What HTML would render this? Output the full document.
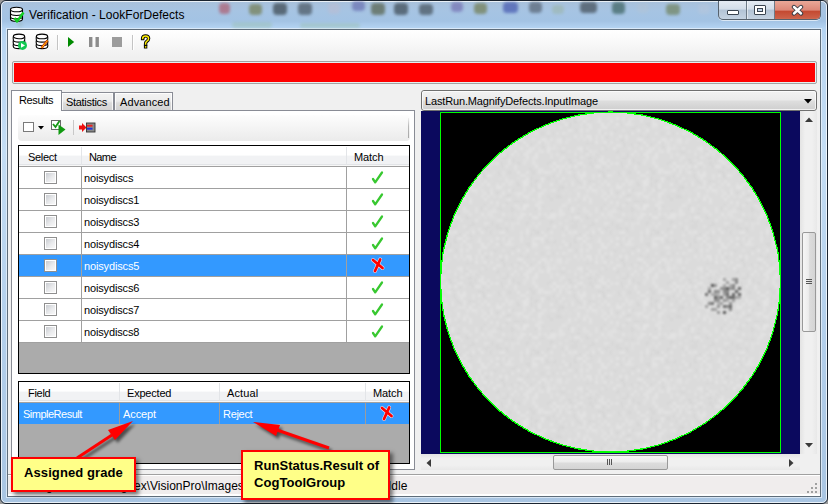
<!DOCTYPE html>
<html><head><meta charset="utf-8">
<style>
*{margin:0;padding:0;box-sizing:border-box}
html,body{width:828px;height:504px;overflow:hidden;background:#9a9a9a}
body{position:relative;font-family:"Liberation Sans",sans-serif;font-size:12px;color:#000}
.a{position:absolute}
.t{position:absolute;white-space:nowrap;line-height:12px}
.g{font-size:11px;line-height:11px;letter-spacing:-0.3px}
.cb{position:absolute;width:13px;height:13px;border:1px solid #8f8f8f;background:#fff;padding:1px}
.cb div{width:100%;height:100%;border:0;background:linear-gradient(135deg,#c9ccd1 0,#e9eaec 55%,#f8f8f8 100%)}
</style></head><body>
<div class="a" style="left:0;top:0;width:828px;height:504px;border:1px solid #1a2430;border-radius:6px;background:linear-gradient(180deg,#a9c1db 0,#a6c4e3 10px,#a3c3e4 20px,#b3d3f2 27px,#bad6f2 40px,#c4ddf4 150px,#b4d0ec 320px,#a9c5e2 504px)"></div>
<div class="a" style="left:1px;top:1px;width:826px;height:502px;border:1px solid rgba(255,255,255,.75);border-radius:5px"></div>
<div class="a" style="left:6px;top:28px;width:816px;height:470px;border:1px solid rgba(235,243,252,.7);border-top:none"></div>
<div class="a" style="left:7px;top:28px;width:814px;height:1px;background:rgba(255,255,255,.5)"></div>
<div class="a" style="left:219px;top:3px;width:11px;height:11px;border-radius:4px;background:#b04050;opacity:0.55;filter:blur(1.8px)"></div>
<div class="a" style="left:249px;top:4px;width:13px;height:11px;border-radius:4px;background:#6a7038;opacity:0.6;filter:blur(1.8px)"></div>
<div class="a" style="left:273px;top:3px;width:14px;height:12px;border-radius:4px;background:#303a40;opacity:0.65;filter:blur(1.8px)"></div>
<div class="a" style="left:298px;top:3px;width:14px;height:12px;border-radius:4px;background:#38424a;opacity:0.6;filter:blur(1.8px)"></div>
<div class="a" style="left:328px;top:3px;width:12px;height:11px;border-radius:4px;background:#c8b8c8;opacity:0.35;filter:blur(1.8px)"></div>
<div class="a" style="left:352px;top:1px;width:13px;height:10px;border-radius:4px;background:#5050a0;opacity:0.5;filter:blur(1.8px)"></div>
<div class="a" style="left:371px;top:3px;width:14px;height:12px;border-radius:4px;background:#485030;opacity:0.6;filter:blur(1.8px)"></div>
<div class="a" style="left:394px;top:3px;width:14px;height:12px;border-radius:4px;background:#283238;opacity:0.6;filter:blur(1.8px)"></div>
<div class="a" style="left:419px;top:4px;width:14px;height:11px;border-radius:4px;background:#343e44;opacity:0.6;filter:blur(1.8px)"></div>
<div class="a" style="left:451px;top:2px;width:12px;height:10px;border-radius:4px;background:#6050a0;opacity:0.5;filter:blur(1.8px)"></div>
<div class="a" style="left:474px;top:3px;width:13px;height:11px;border-radius:4px;background:#687038;opacity:0.6;filter:blur(1.8px)"></div>
<div class="a" style="left:503px;top:2px;width:15px;height:11px;border-radius:4px;background:#2838a0;opacity:0.55;filter:blur(1.8px)"></div>
<div class="a" style="left:529px;top:2px;width:13px;height:11px;border-radius:4px;background:#485260;opacity:0.6;filter:blur(1.8px)"></div>
<div class="a" style="left:552px;top:5px;width:12px;height:9px;border-radius:4px;background:#98b098;opacity:0.45;filter:blur(1.8px)"></div>
<div class="a" style="left:580px;top:2px;width:17px;height:11px;border-radius:4px;background:#38424a;opacity:0.65;filter:blur(1.8px)"></div>
<div class="a" style="left:612px;top:2px;width:13px;height:12px;border-radius:4px;background:#285048;opacity:0.6;filter:blur(1.8px)"></div>
<div class="a" style="left:637px;top:3px;width:12px;height:10px;border-radius:4px;background:#b8c4d0;opacity:0.35;filter:blur(1.8px)"></div>
<div class="a" style="left:666px;top:4px;width:14px;height:11px;border-radius:4px;background:#607038;opacity:0.55;filter:blur(1.8px)"></div>
<div class="a" style="left:698px;top:4px;width:12px;height:10px;border-radius:4px;background:#c0c8d8;opacity:0.35;filter:blur(1.8px)"></div>
<div class="a" style="left:232px;top:22px;width:40px;height:6px;border-radius:4px;background:#90b890;opacity:0.3;filter:blur(1.8px)"></div>
<div class="a" style="left:300px;top:23px;width:60px;height:5px;border-radius:4px;background:#90b890;opacity:0.3;filter:blur(1.8px)"></div>
<div class="a" style="left:17px;top:22px;width:6px;height:5px;border-radius:4px;background:#80a080;opacity:0.2;filter:blur(1.8px)"></div>
<svg class="a" style="left:8px;top:5px" width="18" height="19" viewBox="0 0 18 19">
<g fill="#fff" stroke="#000" stroke-width="1.1">
<path d="M2.5 4.5 v9.5 q0 2.3 6 2.3 q6 0 6-2.3 v-9.5"/>
<ellipse cx="8.5" cy="4.5" rx="6" ry="2.3"/>
<path d="M2.5 8.3 q0 2.2 6 2.2 q6 0 6-2.2 M2.5 11.7 q0 2.2 6 2.2 q6 0 6-2.2" fill="none"/>
</g>
<path d="M6.5 13 l2.5 3.5 l6.5-9" fill="none" stroke="#10d020" stroke-width="2.4" stroke-linejoin="round"/>
</svg>
<div class="t" style="left:29px;top:9px;font-size:12px;line-height:12px;color:#000;letter-spacing:0.05px">Verification - LookForDefects</div>
<div class="a" style="left:718px;top:1px;width:103px;height:19px;border:1px solid #56616d;border-top:none;border-radius:0 0 5px 5px;overflow:hidden;background:linear-gradient(180deg,#e4ebf3 0,#d2dde9 45%,#b3c4d6 50%,#c5d3e2 100%);box-shadow:0 1px 0 rgba(255,255,255,.6)">
 <div class="a" style="left:27px;top:0;width:1px;height:20px;background:#6d7a87"></div>
 <div class="a" style="left:28px;top:0;width:1px;height:20px;background:rgba(255,255,255,.5)"></div>
 <div class="a" style="left:55px;top:0;width:1px;height:20px;background:#6d7a87"></div>
 <div class="a" style="left:56px;top:0;width:46px;height:20px;background:linear-gradient(180deg,#e9a898 0,#dc8878 45%,#c44a32 52%,#cc6048 85%,#d88a70 100%)"></div>
</div>
<div class="a" style="left:727px;top:10px;width:12px;height:5px;background:#fff;border:1px solid #3a4450;border-radius:1px"></div>
<div class="a" style="left:754px;top:5px;width:12px;height:10px;border:1px solid #3a4450;border-radius:1px;background:#fff;padding:2px"><div style="width:100%;height:100%;background:#c4d6ea;border:1px solid #3a4450"></div></div>
<svg class="a" style="left:790px;top:4px" width="15" height="12" viewBox="0 0 15 12"><path d="M4 3 L11 9.5 M11 3 L4 9.5" stroke="#3a3f48" stroke-width="4.4" stroke-linecap="round"/><path d="M4 3 L11 9.5 M11 3 L4 9.5" stroke="#fff" stroke-width="2.4" stroke-linecap="round"/></svg>
<div class="a" style="left:7px;top:29px;width:814px;height:468px;border:1px solid #5f6d7a;background:#f0f0f0"></div>
<div class="a" style="left:8px;top:30px;width:812px;height:27px;background:linear-gradient(180deg,#fff 0,#fbfbfb 30%,#f0f0f0 100%)"></div>
<div class="a" style="left:57px;top:35px;width:1px;height:15px;background:#c4c4c4"></div>
<div class="a" style="left:58px;top:35px;width:1px;height:15px;background:#fff"></div>
<div class="a" style="left:132px;top:35px;width:1px;height:15px;background:#c4c4c4"></div>
<div class="a" style="left:133px;top:35px;width:1px;height:15px;background:#fff"></div>
<svg class="a" style="left:11px;top:32px" width="50" height="20" viewBox="0 0 50 20">
<g fill="#fff" stroke="#000" stroke-width="1.1">
<path d="M2.4 4.4 q-.5 1.9 0 3.8 q-.5 1.8 0 3.6 q-.5 1.6 0 3 q0 1.8 5.6 1.8 q5.6 0 5.6-1.8 q.5-1.4 0-3 q.5-1.8 0-3.6 q.5-1.9 0-3.8"/>
<ellipse cx="8" cy="4.4" rx="5.6" ry="2.3"/>
<path d="M2.4 8.2 q0 1.9 5.6 1.9 q5.6 0 5.6-1.9 M2.4 11.8 q0 1.9 5.6 1.9 q5.6 0 5.6-1.9" fill="none"/>
<path d="M25.4 4.4 q-.5 1.9 0 3.8 q-.5 1.8 0 3.6 q-.5 1.6 0 3 q0 1.8 5.6 1.8 q5.6 0 5.6-1.8 q.5-1.4 0-3 q.5-1.8 0-3.6 q.5-1.9 0-3.8"/>
<ellipse cx="31" cy="4.4" rx="5.6" ry="2.3"/>
<path d="M25.4 8.2 q0 1.9 5.6 1.9 q5.6 0 5.6-1.9 M25.4 11.8 q0 1.9 5.6 1.9 q5.6 0 5.6-1.9" fill="none"/>
</g>
<circle cx="11.5" cy="13.4" r="4.5" fill="#10c850"/>
<path d="M10 11 l4 2.4 l-4 2.4z" fill="#fff"/>
<path d="M30.5 16 l6-7.5" stroke="#d02000" stroke-width="2.4"/>
<path d="M30.5 16 l6-7.5" stroke="#ffe000" stroke-width="1"/>
</svg>
<svg class="a" style="left:66px;top:36px" width="90" height="14" viewBox="0 0 90 14">
<path d="M2 1 l6.2 5 l-6.2 5z" fill="#008a00"/>
<rect x="23" y="1" width="3.4" height="10" fill="#8c8c8c"/>
<rect x="29.5" y="1" width="3.4" height="10" fill="#8c8c8c"/>
<rect x="46" y="1" width="10" height="10" fill="#9c9c9c"/>
</svg>
<svg class="a" style="left:139px;top:34px" width="13" height="16" viewBox="0 0 13 16">
<path d="M3.6 4.6 Q3.6 1.9 6.6 1.9 Q9.6 1.9 9.6 4.6 Q9.6 6.4 7.7 7.4 Q6.6 8.1 6.6 9.6 V10" fill="none" stroke="#000" stroke-width="3.4" stroke-linecap="square"/>
<rect x="4.9" y="11.1" width="3.4" height="3.4" fill="#000"/>
<path d="M3.6 4.6 Q3.6 1.9 6.6 1.9 Q9.6 1.9 9.6 4.6 Q9.6 6.4 7.7 7.4 Q6.6 8.1 6.6 9.6 V10" fill="none" stroke="#ffee00" stroke-width="1.5" stroke-linecap="square"/>
<rect x="5.9" y="12.1" width="1.5" height="1.5" fill="#ffee00"/>
</svg>
<div class="a" style="left:12px;top:61px;width:805px;height:23px;border:1px solid #a3a3a3;border-radius:2px;background:#e4eeee;padding:1px"><div style="width:100%;height:100%;background:#ff0000"></div></div>
<div class="a" style="left:61px;top:92px;width:53px;height:19px;border:1px solid #898c95;border-bottom:none;background:linear-gradient(180deg,#f3f3f3 0,#ececec 45%,#dcdcdc 55%,#d2d2d2 100%)"><div style="position:absolute;inset:0;border:1px solid rgba(255,255,255,.8);border-bottom:none"></div></div>
<div class="a" style="left:114px;top:92px;width:59px;height:19px;border:1px solid #898c95;border-bottom:none;background:linear-gradient(180deg,#f3f3f3 0,#ececec 45%,#dcdcdc 55%,#d2d2d2 100%)"><div style="position:absolute;inset:0;border:1px solid rgba(255,255,255,.8);border-bottom:none"></div></div>
<div class="a" style="left:11px;top:110px;width:404px;height:360px;border:1px solid #898c95;background:#fff"></div>
<div class="a" style="left:11px;top:90px;width:51px;height:21px;border:1px solid #898c95;border-bottom:none;background:#fff"></div>
<div class="t g" style="left:19px;top:95px;letter-spacing:-0.35px">Results</div>
<div class="t g" style="left:66px;top:97px;letter-spacing:-0.3px">Statistics</div>
<div class="t g" style="left:120px;top:97px;letter-spacing:0.1px">Advanced</div>
<div class="a" style="left:18px;top:115px;width:392px;height:26px;border-radius:4px;background:linear-gradient(180deg,#fdfdfd 0,#f4f4f4 50%,#ebebeb 100%)"></div>
<div class="a" style="left:408px;top:118px;width:1px;height:20px;background:linear-gradient(180deg,#f0f0f0 0,#b8b8b8 40%,#a8a8a8 100%)"></div>
<div class="a" style="left:23px;top:122px;width:11px;height:10px;border:1px solid #7a7a7a;background:#fff"></div>
<svg class="a" style="left:38px;top:126px" width="7" height="4"><path d="M0 0h6l-3 3.5z" fill="#000"/></svg>
<svg class="a" style="left:50px;top:119px" width="48" height="18" viewBox="0 0 48 18">
<rect x="1.5" y="1.5" width="9" height="9" fill="#fff" stroke="#6a6a6a"/>
<path d="M3 5 l2.5 3 l4-6" fill="none" stroke="#169616" stroke-width="1.8"/>
<path d="M8.5 5.5 l7 5 l-7 5.5z" fill="#109a10"/>
<rect x="23" y="1" width="1" height="15" fill="#c8c8c8"/>
<path d="M29 6.5 h3 v-2.5 l4.5 4.5 l-4.5 4.5 v-2.5 h-3z" fill="#ee1010"/>
<rect x="36.5" y="4" width="8.5" height="9" fill="#8a8a8a" stroke="#333" stroke-width="0.9"/>
<rect x="37" y="5.8" width="5.5" height="1.8" fill="#f02020"/>
<rect x="37" y="8.8" width="5.5" height="1.8" fill="#2030e0"/>
</svg>
<div class="a" style="left:18px;top:145px;width:392px;height:229px;border:1px solid #000;background:#ababab;overflow:hidden">
 <div class="a" style="left:0;top:0;width:390px;height:21px;background:linear-gradient(180deg,#fff 0,#fff 42%,#f1f2f4 50%,#f1f2f4 100%)"></div>
 <div class="a" style="left:0;top:18px;width:390px;height:1px;background:#e2e4e7"></div><div class="a" style="left:0;top:19px;width:390px;height:1px;background:#f7f7f7"></div><div class="a" style="left:0;top:20px;width:390px;height:1px;background:#a0a0a0"></div>
 <div class="a" style="left:62px;top:1px;width:1px;height:18px;background:#e3e5e8"></div>
 <div class="a" style="left:327px;top:1px;width:1px;height:18px;background:#e3e5e8"></div>
 <div class="a" style="left:0;top:21px;width:390px;height:22px;background:#fff;border-bottom:1px solid #a0a0a0"></div>
 <div class="a" style="left:62px;top:21px;width:1px;height:22px;background:#a0a0a0"></div>
 <div class="a" style="left:327px;top:21px;width:1px;height:22px;background:#a0a0a0"></div>
 <div class="a" style="left:0;top:43px;width:390px;height:22px;background:#fff;border-bottom:1px solid #a0a0a0"></div>
 <div class="a" style="left:62px;top:43px;width:1px;height:22px;background:#a0a0a0"></div>
 <div class="a" style="left:327px;top:43px;width:1px;height:22px;background:#a0a0a0"></div>
 <div class="a" style="left:0;top:65px;width:390px;height:22px;background:#fff;border-bottom:1px solid #a0a0a0"></div>
 <div class="a" style="left:62px;top:65px;width:1px;height:22px;background:#a0a0a0"></div>
 <div class="a" style="left:327px;top:65px;width:1px;height:22px;background:#a0a0a0"></div>
 <div class="a" style="left:0;top:87px;width:390px;height:22px;background:#fff;border-bottom:1px solid #a0a0a0"></div>
 <div class="a" style="left:62px;top:87px;width:1px;height:22px;background:#a0a0a0"></div>
 <div class="a" style="left:327px;top:87px;width:1px;height:22px;background:#a0a0a0"></div>
 <div class="a" style="left:0;top:109px;width:390px;height:22px;background:#3399ff;border-bottom:1px solid #a0a0a0"></div>
 <div class="a" style="left:62px;top:109px;width:1px;height:22px;background:#a0a0a0"></div>
 <div class="a" style="left:327px;top:109px;width:1px;height:22px;background:#a0a0a0"></div>
 <div class="a" style="left:0;top:131px;width:390px;height:22px;background:#fff;border-bottom:1px solid #a0a0a0"></div>
 <div class="a" style="left:62px;top:131px;width:1px;height:22px;background:#a0a0a0"></div>
 <div class="a" style="left:327px;top:131px;width:1px;height:22px;background:#a0a0a0"></div>
 <div class="a" style="left:0;top:153px;width:390px;height:22px;background:#fff;border-bottom:1px solid #a0a0a0"></div>
 <div class="a" style="left:62px;top:153px;width:1px;height:22px;background:#a0a0a0"></div>
 <div class="a" style="left:327px;top:153px;width:1px;height:22px;background:#a0a0a0"></div>
 <div class="a" style="left:0;top:175px;width:390px;height:22px;background:#fff;border-bottom:1px solid #a0a0a0"></div>
 <div class="a" style="left:62px;top:175px;width:1px;height:22px;background:#a0a0a0"></div>
 <div class="a" style="left:327px;top:175px;width:1px;height:22px;background:#a0a0a0"></div>
</div>
<div class="cb" style="left:44px;top:171px"><div></div></div>
<div class="t g" style="left:84px;top:173px;color:#000;letter-spacing:-0.15px">noisydiscs</div>
<svg class="a" style="left:369px;top:169px" width="16" height="16" viewBox="0 0 16 16"><path d="M4 10 L6.2 13.3 L13 3.5" fill="none" stroke="#38c830" stroke-width="2.3" stroke-linecap="round" stroke-linejoin="round"/></svg>
<div class="cb" style="left:44px;top:193px"><div></div></div>
<div class="t g" style="left:84px;top:195px;color:#000;letter-spacing:-0.15px">noisydiscs1</div>
<svg class="a" style="left:369px;top:191px" width="16" height="16" viewBox="0 0 16 16"><path d="M4 10 L6.2 13.3 L13 3.5" fill="none" stroke="#38c830" stroke-width="2.3" stroke-linecap="round" stroke-linejoin="round"/></svg>
<div class="cb" style="left:44px;top:215px"><div></div></div>
<div class="t g" style="left:84px;top:217px;color:#000;letter-spacing:-0.15px">noisydiscs3</div>
<svg class="a" style="left:369px;top:213px" width="16" height="16" viewBox="0 0 16 16"><path d="M4 10 L6.2 13.3 L13 3.5" fill="none" stroke="#38c830" stroke-width="2.3" stroke-linecap="round" stroke-linejoin="round"/></svg>
<div class="cb" style="left:44px;top:237px"><div></div></div>
<div class="t g" style="left:84px;top:239px;color:#000;letter-spacing:-0.15px">noisydiscs4</div>
<svg class="a" style="left:369px;top:235px" width="16" height="16" viewBox="0 0 16 16"><path d="M4 10 L6.2 13.3 L13 3.5" fill="none" stroke="#38c830" stroke-width="2.3" stroke-linecap="round" stroke-linejoin="round"/></svg>
<div class="cb" style="left:44px;top:259px"><div></div></div>
<div class="t g" style="left:84px;top:261px;color:#fff;letter-spacing:-0.15px">noisydiscs5</div>
<svg class="a" style="left:369px;top:255px" width="18" height="20" viewBox="0 0 18 20"><g stroke="#fff" stroke-width="3.8" stroke-linecap="round" opacity="0.85"><path d="M4 5 L13.5 13 M11.2 4.5 L6 16"/></g><g stroke="#f00" stroke-width="2.8" stroke-linecap="round"><path d="M4 5 L13.5 13 M11.2 4.5 L6 16"/></g></svg>
<div class="cb" style="left:44px;top:281px"><div></div></div>
<div class="t g" style="left:84px;top:283px;color:#000;letter-spacing:-0.15px">noisydiscs6</div>
<svg class="a" style="left:369px;top:279px" width="16" height="16" viewBox="0 0 16 16"><path d="M4 10 L6.2 13.3 L13 3.5" fill="none" stroke="#38c830" stroke-width="2.3" stroke-linecap="round" stroke-linejoin="round"/></svg>
<div class="cb" style="left:44px;top:303px"><div></div></div>
<div class="t g" style="left:84px;top:305px;color:#000;letter-spacing:-0.15px">noisydiscs7</div>
<svg class="a" style="left:369px;top:301px" width="16" height="16" viewBox="0 0 16 16"><path d="M4 10 L6.2 13.3 L13 3.5" fill="none" stroke="#38c830" stroke-width="2.3" stroke-linecap="round" stroke-linejoin="round"/></svg>
<div class="cb" style="left:44px;top:325px"><div></div></div>
<div class="t g" style="left:84px;top:327px;color:#000;letter-spacing:-0.15px">noisydiscs8</div>
<svg class="a" style="left:369px;top:323px" width="16" height="16" viewBox="0 0 16 16"><path d="M4 10 L6.2 13.3 L13 3.5" fill="none" stroke="#38c830" stroke-width="2.3" stroke-linecap="round" stroke-linejoin="round"/></svg>
<div class="t g" style="left:28px;top:152px">Select</div>
<div class="t g" style="left:89px;top:152px;letter-spacing:-0.6px">Name</div>
<div class="t g" style="left:354px;top:152px;letter-spacing:-0.1px">Match</div>
<div class="a" style="left:18px;top:381px;width:392px;height:83px;border:1px solid #000;background:#ababab;overflow:hidden">
 <div class="a" style="left:0;top:0;width:390px;height:21px;background:linear-gradient(180deg,#fff 0,#fff 42%,#f1f2f4 50%,#f1f2f4 100%)"></div>
 <div class="a" style="left:0;top:18px;width:390px;height:1px;background:#e2e4e7"></div><div class="a" style="left:0;top:19px;width:390px;height:1px;background:#f7f7f7"></div><div class="a" style="left:0;top:20px;width:390px;height:1px;background:#a0a0a0"></div>
 <div class="a" style="left:0;top:21px;width:390px;height:21px;background:#3399ff"></div>
 <div class="a" style="left:100px;top:21px;width:1px;height:21px;background:#9c9c9c"></div>
 <div class="a" style="left:100px;top:1px;width:1px;height:18px;background:#e3e5e8"></div>
 <div class="a" style="left:200px;top:21px;width:1px;height:21px;background:#9c9c9c"></div>
 <div class="a" style="left:200px;top:1px;width:1px;height:18px;background:#e3e5e8"></div>
 <div class="a" style="left:346px;top:21px;width:1px;height:21px;background:#9c9c9c"></div>
 <div class="a" style="left:346px;top:1px;width:1px;height:18px;background:#e3e5e8"></div>
</div>
<div class="t g" style="left:28px;top:388px">Field</div>
<div class="t g" style="left:127px;top:388px;letter-spacing:-0.2px">Expected</div>
<div class="t g" style="left:227px;top:388px;letter-spacing:0.1px">Actual</div>
<div class="t g" style="left:373px;top:388px;letter-spacing:-0.1px">Match</div>
<div class="t g" style="left:23px;top:409px;color:#fff;letter-spacing:-0.5px">SimpleResult</div>
<div class="t g" style="left:123px;top:409px;color:#fff;letter-spacing:-0.1px">Accept</div>
<div class="t g" style="left:223px;top:409px;color:#fff">Reject</div>
<svg class="a" style="left:378px;top:403px" width="18" height="20" viewBox="0 0 18 20"><g stroke="#fff" stroke-width="3.8" stroke-linecap="round" opacity="0.85"><path d="M4 5 L13.5 13 M11.2 4.5 L6 16"/></g><g stroke="#f00" stroke-width="2.8" stroke-linecap="round"><path d="M4 5 L13.5 13 M11.2 4.5 L6 16"/></g></svg>
<div class="a" style="left:421px;top:90px;width:396px;height:21px;border:1px solid #707070;border-radius:3px;background:linear-gradient(180deg,#f2f2f2 0,#ebebeb 45%,#dddddd 55%,#cfcfcf 100%)"><div style="position:absolute;inset:0;border:1px solid rgba(255,255,255,.7);border-radius:2px"></div></div>
<div class="t g" style="left:425px;top:96px;letter-spacing:-0.15px">LastRun.MagnifyDefects.InputImage</div>
<svg class="a" style="left:804px;top:99px" width="9" height="5"><path d="M0 0h8l-4 4.5z" fill="#000"/></svg>
<svg class="a" style="left:421px;top:111px" width="379" height="343" viewBox="0 0 379 343">
<defs>
<filter id="nz" x="0" y="0" width="100%" height="100%"><feTurbulence type="fractalNoise" baseFrequency="0.16" numOctaves="1" seed="4"/><feColorMatrix type="matrix" values="0 0 0 0 1  0 0 0 0 1  0 0 0 0 1  0.9 0 0 0 -0.3"/></filter>
<filter id="bl2" x="0" y="0" width="100%" height="100%"><feGaussianBlur stdDeviation="1"/></filter>
<filter id="bl" x="-20%" y="-20%" width="140%" height="140%"><feGaussianBlur stdDeviation="1"/></filter>
<pattern id="pt" x="0" y="0" width="120" height="120" patternUnits="userSpaceOnUse"><rect x="0" y="0" width="3" height="3" fill="#fff" opacity="0.18"/><rect x="9" y="0" width="3" height="3" fill="#fff" opacity="0.20"/><rect x="21" y="0" width="3" height="3" fill="#fff" opacity="0.06"/><rect x="24" y="0" width="3" height="3" fill="#000" opacity="0.024"/><rect x="27" y="0" width="3" height="3" fill="#fff" opacity="0.20"/><rect x="30" y="0" width="3" height="3" fill="#fff" opacity="0.10"/><rect x="33" y="0" width="3" height="3" fill="#fff" opacity="0.24"/><rect x="45" y="0" width="3" height="3" fill="#fff" opacity="0.12"/><rect x="51" y="0" width="3" height="3" fill="#fff" opacity="0.23"/><rect x="54" y="0" width="3" height="3" fill="#000" opacity="0.017"/><rect x="60" y="0" width="3" height="3" fill="#fff" opacity="0.23"/><rect x="69" y="0" width="3" height="3" fill="#000" opacity="0.022"/><rect x="72" y="0" width="3" height="3" fill="#fff" opacity="0.07"/><rect x="78" y="0" width="3" height="3" fill="#fff" opacity="0.20"/><rect x="81" y="0" width="3" height="3" fill="#fff" opacity="0.23"/><rect x="99" y="0" width="3" height="3" fill="#fff" opacity="0.15"/><rect x="105" y="0" width="3" height="3" fill="#fff" opacity="0.23"/><rect x="114" y="0" width="3" height="3" fill="#000" opacity="0.022"/><rect x="117" y="0" width="3" height="3" fill="#000" opacity="0.030"/><rect x="0" y="3" width="3" height="3" fill="#000" opacity="0.015"/><rect x="3" y="3" width="3" height="3" fill="#fff" opacity="0.19"/><rect x="21" y="3" width="3" height="3" fill="#fff" opacity="0.17"/><rect x="30" y="3" width="3" height="3" fill="#fff" opacity="0.09"/><rect x="33" y="3" width="3" height="3" fill="#000" opacity="0.029"/><rect x="36" y="3" width="3" height="3" fill="#000" opacity="0.024"/><rect x="39" y="3" width="3" height="3" fill="#000" opacity="0.017"/><rect x="42" y="3" width="3" height="3" fill="#fff" opacity="0.21"/><rect x="48" y="3" width="3" height="3" fill="#000" opacity="0.025"/><rect x="78" y="3" width="3" height="3" fill="#000" opacity="0.019"/><rect x="84" y="3" width="3" height="3" fill="#fff" opacity="0.07"/><rect x="99" y="3" width="3" height="3" fill="#fff" opacity="0.11"/><rect x="102" y="3" width="3" height="3" fill="#000" opacity="0.021"/><rect x="105" y="3" width="3" height="3" fill="#fff" opacity="0.07"/><rect x="108" y="3" width="3" height="3" fill="#000" opacity="0.028"/><rect x="0" y="6" width="3" height="3" fill="#fff" opacity="0.23"/><rect x="9" y="6" width="3" height="3" fill="#fff" opacity="0.10"/><rect x="33" y="6" width="3" height="3" fill="#000" opacity="0.023"/><rect x="36" y="6" width="3" height="3" fill="#fff" opacity="0.20"/><rect x="39" y="6" width="3" height="3" fill="#fff" opacity="0.18"/><rect x="45" y="6" width="3" height="3" fill="#fff" opacity="0.17"/><rect x="57" y="6" width="3" height="3" fill="#fff" opacity="0.13"/><rect x="66" y="6" width="3" height="3" fill="#fff" opacity="0.08"/><rect x="69" y="6" width="3" height="3" fill="#fff" opacity="0.06"/><rect x="75" y="6" width="3" height="3" fill="#fff" opacity="0.22"/><rect x="81" y="6" width="3" height="3" fill="#fff" opacity="0.16"/><rect x="84" y="6" width="3" height="3" fill="#000" opacity="0.022"/><rect x="87" y="6" width="3" height="3" fill="#fff" opacity="0.09"/><rect x="90" y="6" width="3" height="3" fill="#fff" opacity="0.13"/><rect x="99" y="6" width="3" height="3" fill="#fff" opacity="0.19"/><rect x="111" y="6" width="3" height="3" fill="#fff" opacity="0.14"/><rect x="114" y="6" width="3" height="3" fill="#fff" opacity="0.20"/><rect x="117" y="6" width="3" height="3" fill="#fff" opacity="0.19"/><rect x="0" y="9" width="3" height="3" fill="#fff" opacity="0.19"/><rect x="3" y="9" width="3" height="3" fill="#000" opacity="0.016"/><rect x="6" y="9" width="3" height="3" fill="#000" opacity="0.020"/><rect x="12" y="9" width="3" height="3" fill="#000" opacity="0.023"/><rect x="21" y="9" width="3" height="3" fill="#fff" opacity="0.17"/><rect x="33" y="9" width="3" height="3" fill="#000" opacity="0.025"/><rect x="42" y="9" width="3" height="3" fill="#fff" opacity="0.21"/><rect x="48" y="9" width="3" height="3" fill="#000" opacity="0.020"/><rect x="54" y="9" width="3" height="3" fill="#fff" opacity="0.07"/><rect x="57" y="9" width="3" height="3" fill="#fff" opacity="0.21"/><rect x="69" y="9" width="3" height="3" fill="#fff" opacity="0.18"/><rect x="78" y="9" width="3" height="3" fill="#000" opacity="0.021"/><rect x="81" y="9" width="3" height="3" fill="#fff" opacity="0.07"/><rect x="87" y="9" width="3" height="3" fill="#fff" opacity="0.19"/><rect x="99" y="9" width="3" height="3" fill="#fff" opacity="0.13"/><rect x="111" y="9" width="3" height="3" fill="#fff" opacity="0.15"/><rect x="24" y="12" width="3" height="3" fill="#fff" opacity="0.23"/><rect x="27" y="12" width="3" height="3" fill="#000" opacity="0.024"/><rect x="39" y="12" width="3" height="3" fill="#fff" opacity="0.12"/><rect x="42" y="12" width="3" height="3" fill="#000" opacity="0.021"/><rect x="45" y="12" width="3" height="3" fill="#fff" opacity="0.16"/><rect x="48" y="12" width="3" height="3" fill="#fff" opacity="0.11"/><rect x="60" y="12" width="3" height="3" fill="#fff" opacity="0.23"/><rect x="66" y="12" width="3" height="3" fill="#fff" opacity="0.12"/><rect x="75" y="12" width="3" height="3" fill="#fff" opacity="0.23"/><rect x="78" y="12" width="3" height="3" fill="#000" opacity="0.019"/><rect x="84" y="12" width="3" height="3" fill="#fff" opacity="0.18"/><rect x="87" y="12" width="3" height="3" fill="#fff" opacity="0.17"/><rect x="90" y="12" width="3" height="3" fill="#fff" opacity="0.13"/><rect x="105" y="12" width="3" height="3" fill="#000" opacity="0.018"/><rect x="108" y="12" width="3" height="3" fill="#000" opacity="0.019"/><rect x="111" y="12" width="3" height="3" fill="#fff" opacity="0.23"/><rect x="114" y="12" width="3" height="3" fill="#fff" opacity="0.21"/><rect x="3" y="15" width="3" height="3" fill="#fff" opacity="0.15"/><rect x="6" y="15" width="3" height="3" fill="#fff" opacity="0.17"/><rect x="12" y="15" width="3" height="3" fill="#fff" opacity="0.06"/><rect x="18" y="15" width="3" height="3" fill="#fff" opacity="0.12"/><rect x="27" y="15" width="3" height="3" fill="#000" opacity="0.017"/><rect x="39" y="15" width="3" height="3" fill="#fff" opacity="0.09"/><rect x="48" y="15" width="3" height="3" fill="#fff" opacity="0.20"/><rect x="60" y="15" width="3" height="3" fill="#fff" opacity="0.16"/><rect x="63" y="15" width="3" height="3" fill="#fff" opacity="0.22"/><rect x="72" y="15" width="3" height="3" fill="#fff" opacity="0.07"/><rect x="90" y="15" width="3" height="3" fill="#000" opacity="0.019"/><rect x="93" y="15" width="3" height="3" fill="#000" opacity="0.019"/><rect x="102" y="15" width="3" height="3" fill="#fff" opacity="0.07"/><rect x="111" y="15" width="3" height="3" fill="#fff" opacity="0.11"/><rect x="114" y="15" width="3" height="3" fill="#fff" opacity="0.07"/><rect x="6" y="18" width="3" height="3" fill="#fff" opacity="0.08"/><rect x="27" y="18" width="3" height="3" fill="#fff" opacity="0.21"/><rect x="30" y="18" width="3" height="3" fill="#fff" opacity="0.07"/><rect x="33" y="18" width="3" height="3" fill="#000" opacity="0.023"/><rect x="39" y="18" width="3" height="3" fill="#fff" opacity="0.19"/><rect x="45" y="18" width="3" height="3" fill="#fff" opacity="0.21"/><rect x="57" y="18" width="3" height="3" fill="#fff" opacity="0.20"/><rect x="72" y="18" width="3" height="3" fill="#000" opacity="0.029"/><rect x="81" y="18" width="3" height="3" fill="#fff" opacity="0.12"/><rect x="96" y="18" width="3" height="3" fill="#fff" opacity="0.23"/><rect x="105" y="18" width="3" height="3" fill="#fff" opacity="0.24"/><rect x="0" y="21" width="3" height="3" fill="#000" opacity="0.016"/><rect x="6" y="21" width="3" height="3" fill="#fff" opacity="0.16"/><rect x="12" y="21" width="3" height="3" fill="#000" opacity="0.017"/><rect x="15" y="21" width="3" height="3" fill="#fff" opacity="0.14"/><rect x="21" y="21" width="3" height="3" fill="#fff" opacity="0.18"/><rect x="24" y="21" width="3" height="3" fill="#fff" opacity="0.08"/><rect x="39" y="21" width="3" height="3" fill="#fff" opacity="0.10"/><rect x="57" y="21" width="3" height="3" fill="#fff" opacity="0.14"/><rect x="60" y="21" width="3" height="3" fill="#000" opacity="0.022"/><rect x="63" y="21" width="3" height="3" fill="#fff" opacity="0.16"/><rect x="69" y="21" width="3" height="3" fill="#fff" opacity="0.21"/><rect x="87" y="21" width="3" height="3" fill="#000" opacity="0.021"/><rect x="90" y="21" width="3" height="3" fill="#fff" opacity="0.18"/><rect x="102" y="21" width="3" height="3" fill="#fff" opacity="0.10"/><rect x="114" y="21" width="3" height="3" fill="#fff" opacity="0.13"/><rect x="6" y="24" width="3" height="3" fill="#000" opacity="0.024"/><rect x="21" y="24" width="3" height="3" fill="#000" opacity="0.019"/><rect x="33" y="24" width="3" height="3" fill="#fff" opacity="0.21"/><rect x="39" y="24" width="3" height="3" fill="#fff" opacity="0.12"/><rect x="45" y="24" width="3" height="3" fill="#fff" opacity="0.21"/><rect x="48" y="24" width="3" height="3" fill="#fff" opacity="0.18"/><rect x="51" y="24" width="3" height="3" fill="#000" opacity="0.018"/><rect x="54" y="24" width="3" height="3" fill="#fff" opacity="0.15"/><rect x="60" y="24" width="3" height="3" fill="#fff" opacity="0.18"/><rect x="63" y="24" width="3" height="3" fill="#000" opacity="0.025"/><rect x="66" y="24" width="3" height="3" fill="#000" opacity="0.018"/><rect x="69" y="24" width="3" height="3" fill="#fff" opacity="0.07"/><rect x="78" y="24" width="3" height="3" fill="#fff" opacity="0.22"/><rect x="84" y="24" width="3" height="3" fill="#fff" opacity="0.19"/><rect x="99" y="24" width="3" height="3" fill="#000" opacity="0.025"/><rect x="105" y="24" width="3" height="3" fill="#000" opacity="0.020"/><rect x="0" y="27" width="3" height="3" fill="#fff" opacity="0.20"/><rect x="3" y="27" width="3" height="3" fill="#fff" opacity="0.18"/><rect x="9" y="27" width="3" height="3" fill="#fff" opacity="0.17"/><rect x="15" y="27" width="3" height="3" fill="#fff" opacity="0.15"/><rect x="18" y="27" width="3" height="3" fill="#fff" opacity="0.20"/><rect x="21" y="27" width="3" height="3" fill="#000" opacity="0.020"/><rect x="24" y="27" width="3" height="3" fill="#fff" opacity="0.07"/><rect x="27" y="27" width="3" height="3" fill="#fff" opacity="0.09"/><rect x="36" y="27" width="3" height="3" fill="#fff" opacity="0.08"/><rect x="42" y="27" width="3" height="3" fill="#fff" opacity="0.13"/><rect x="48" y="27" width="3" height="3" fill="#fff" opacity="0.19"/><rect x="54" y="27" width="3" height="3" fill="#fff" opacity="0.10"/><rect x="60" y="27" width="3" height="3" fill="#fff" opacity="0.10"/><rect x="75" y="27" width="3" height="3" fill="#fff" opacity="0.11"/><rect x="78" y="27" width="3" height="3" fill="#000" opacity="0.029"/><rect x="81" y="27" width="3" height="3" fill="#000" opacity="0.027"/><rect x="84" y="27" width="3" height="3" fill="#fff" opacity="0.15"/><rect x="96" y="27" width="3" height="3" fill="#fff" opacity="0.23"/><rect x="99" y="27" width="3" height="3" fill="#fff" opacity="0.23"/><rect x="111" y="27" width="3" height="3" fill="#fff" opacity="0.12"/><rect x="0" y="30" width="3" height="3" fill="#000" opacity="0.027"/><rect x="3" y="30" width="3" height="3" fill="#fff" opacity="0.11"/><rect x="6" y="30" width="3" height="3" fill="#fff" opacity="0.12"/><rect x="15" y="30" width="3" height="3" fill="#fff" opacity="0.12"/><rect x="18" y="30" width="3" height="3" fill="#fff" opacity="0.18"/><rect x="24" y="30" width="3" height="3" fill="#fff" opacity="0.13"/><rect x="45" y="30" width="3" height="3" fill="#000" opacity="0.018"/><rect x="51" y="30" width="3" height="3" fill="#000" opacity="0.020"/><rect x="54" y="30" width="3" height="3" fill="#fff" opacity="0.22"/><rect x="60" y="30" width="3" height="3" fill="#fff" opacity="0.07"/><rect x="63" y="30" width="3" height="3" fill="#fff" opacity="0.22"/><rect x="66" y="30" width="3" height="3" fill="#000" opacity="0.025"/><rect x="69" y="30" width="3" height="3" fill="#fff" opacity="0.18"/><rect x="81" y="30" width="3" height="3" fill="#000" opacity="0.019"/><rect x="96" y="30" width="3" height="3" fill="#000" opacity="0.028"/><rect x="102" y="30" width="3" height="3" fill="#fff" opacity="0.18"/><rect x="117" y="30" width="3" height="3" fill="#fff" opacity="0.24"/><rect x="0" y="33" width="3" height="3" fill="#000" opacity="0.021"/><rect x="6" y="33" width="3" height="3" fill="#fff" opacity="0.13"/><rect x="12" y="33" width="3" height="3" fill="#fff" opacity="0.11"/><rect x="60" y="33" width="3" height="3" fill="#000" opacity="0.017"/><rect x="63" y="33" width="3" height="3" fill="#000" opacity="0.017"/><rect x="66" y="33" width="3" height="3" fill="#fff" opacity="0.08"/><rect x="75" y="33" width="3" height="3" fill="#fff" opacity="0.17"/><rect x="78" y="33" width="3" height="3" fill="#fff" opacity="0.15"/><rect x="81" y="33" width="3" height="3" fill="#000" opacity="0.022"/><rect x="90" y="33" width="3" height="3" fill="#000" opacity="0.026"/><rect x="93" y="33" width="3" height="3" fill="#fff" opacity="0.12"/><rect x="105" y="33" width="3" height="3" fill="#fff" opacity="0.17"/><rect x="108" y="33" width="3" height="3" fill="#000" opacity="0.026"/><rect x="114" y="33" width="3" height="3" fill="#fff" opacity="0.12"/><rect x="0" y="36" width="3" height="3" fill="#000" opacity="0.024"/><rect x="6" y="36" width="3" height="3" fill="#fff" opacity="0.20"/><rect x="9" y="36" width="3" height="3" fill="#fff" opacity="0.12"/><rect x="12" y="36" width="3" height="3" fill="#fff" opacity="0.12"/><rect x="15" y="36" width="3" height="3" fill="#fff" opacity="0.06"/><rect x="21" y="36" width="3" height="3" fill="#fff" opacity="0.16"/><rect x="36" y="36" width="3" height="3" fill="#fff" opacity="0.20"/><rect x="39" y="36" width="3" height="3" fill="#fff" opacity="0.23"/><rect x="42" y="36" width="3" height="3" fill="#000" opacity="0.019"/><rect x="45" y="36" width="3" height="3" fill="#fff" opacity="0.13"/><rect x="60" y="36" width="3" height="3" fill="#fff" opacity="0.12"/><rect x="63" y="36" width="3" height="3" fill="#000" opacity="0.022"/><rect x="72" y="36" width="3" height="3" fill="#fff" opacity="0.23"/><rect x="87" y="36" width="3" height="3" fill="#fff" opacity="0.17"/><rect x="99" y="36" width="3" height="3" fill="#fff" opacity="0.19"/><rect x="108" y="36" width="3" height="3" fill="#fff" opacity="0.16"/><rect x="111" y="36" width="3" height="3" fill="#fff" opacity="0.20"/><rect x="117" y="36" width="3" height="3" fill="#fff" opacity="0.12"/><rect x="0" y="39" width="3" height="3" fill="#fff" opacity="0.17"/><rect x="6" y="39" width="3" height="3" fill="#fff" opacity="0.23"/><rect x="18" y="39" width="3" height="3" fill="#000" opacity="0.024"/><rect x="21" y="39" width="3" height="3" fill="#000" opacity="0.022"/><rect x="27" y="39" width="3" height="3" fill="#fff" opacity="0.11"/><rect x="33" y="39" width="3" height="3" fill="#fff" opacity="0.07"/><rect x="39" y="39" width="3" height="3" fill="#fff" opacity="0.13"/><rect x="42" y="39" width="3" height="3" fill="#000" opacity="0.019"/><rect x="45" y="39" width="3" height="3" fill="#000" opacity="0.023"/><rect x="48" y="39" width="3" height="3" fill="#fff" opacity="0.16"/><rect x="51" y="39" width="3" height="3" fill="#fff" opacity="0.07"/><rect x="54" y="39" width="3" height="3" fill="#fff" opacity="0.10"/><rect x="57" y="39" width="3" height="3" fill="#000" opacity="0.019"/><rect x="75" y="39" width="3" height="3" fill="#000" opacity="0.024"/><rect x="93" y="39" width="3" height="3" fill="#fff" opacity="0.18"/><rect x="105" y="39" width="3" height="3" fill="#fff" opacity="0.19"/><rect x="108" y="39" width="3" height="3" fill="#fff" opacity="0.20"/><rect x="117" y="39" width="3" height="3" fill="#fff" opacity="0.11"/><rect x="9" y="42" width="3" height="3" fill="#fff" opacity="0.11"/><rect x="15" y="42" width="3" height="3" fill="#fff" opacity="0.16"/><rect x="33" y="42" width="3" height="3" fill="#fff" opacity="0.14"/><rect x="45" y="42" width="3" height="3" fill="#fff" opacity="0.18"/><rect x="51" y="42" width="3" height="3" fill="#fff" opacity="0.11"/><rect x="54" y="42" width="3" height="3" fill="#000" opacity="0.018"/><rect x="81" y="42" width="3" height="3" fill="#fff" opacity="0.13"/><rect x="84" y="42" width="3" height="3" fill="#000" opacity="0.020"/><rect x="90" y="42" width="3" height="3" fill="#fff" opacity="0.18"/><rect x="96" y="42" width="3" height="3" fill="#fff" opacity="0.09"/><rect x="99" y="42" width="3" height="3" fill="#000" opacity="0.027"/><rect x="102" y="42" width="3" height="3" fill="#fff" opacity="0.20"/><rect x="105" y="42" width="3" height="3" fill="#fff" opacity="0.17"/><rect x="114" y="42" width="3" height="3" fill="#fff" opacity="0.23"/><rect x="9" y="45" width="3" height="3" fill="#fff" opacity="0.13"/><rect x="18" y="45" width="3" height="3" fill="#fff" opacity="0.09"/><rect x="21" y="45" width="3" height="3" fill="#fff" opacity="0.17"/><rect x="36" y="45" width="3" height="3" fill="#000" opacity="0.025"/><rect x="39" y="45" width="3" height="3" fill="#fff" opacity="0.15"/><rect x="42" y="45" width="3" height="3" fill="#fff" opacity="0.08"/><rect x="45" y="45" width="3" height="3" fill="#000" opacity="0.017"/><rect x="48" y="45" width="3" height="3" fill="#000" opacity="0.025"/><rect x="60" y="45" width="3" height="3" fill="#fff" opacity="0.19"/><rect x="75" y="45" width="3" height="3" fill="#fff" opacity="0.12"/><rect x="81" y="45" width="3" height="3" fill="#000" opacity="0.017"/><rect x="84" y="45" width="3" height="3" fill="#000" opacity="0.025"/><rect x="105" y="45" width="3" height="3" fill="#fff" opacity="0.20"/><rect x="111" y="45" width="3" height="3" fill="#fff" opacity="0.15"/><rect x="114" y="45" width="3" height="3" fill="#fff" opacity="0.20"/><rect x="9" y="48" width="3" height="3" fill="#000" opacity="0.020"/><rect x="18" y="48" width="3" height="3" fill="#fff" opacity="0.13"/><rect x="27" y="48" width="3" height="3" fill="#000" opacity="0.022"/><rect x="33" y="48" width="3" height="3" fill="#fff" opacity="0.11"/><rect x="54" y="48" width="3" height="3" fill="#000" opacity="0.018"/><rect x="57" y="48" width="3" height="3" fill="#fff" opacity="0.20"/><rect x="60" y="48" width="3" height="3" fill="#fff" opacity="0.16"/><rect x="66" y="48" width="3" height="3" fill="#fff" opacity="0.17"/><rect x="87" y="48" width="3" height="3" fill="#fff" opacity="0.20"/><rect x="90" y="48" width="3" height="3" fill="#000" opacity="0.030"/><rect x="102" y="48" width="3" height="3" fill="#fff" opacity="0.11"/><rect x="105" y="48" width="3" height="3" fill="#fff" opacity="0.09"/><rect x="111" y="48" width="3" height="3" fill="#fff" opacity="0.17"/><rect x="6" y="51" width="3" height="3" fill="#000" opacity="0.016"/><rect x="12" y="51" width="3" height="3" fill="#fff" opacity="0.24"/><rect x="24" y="51" width="3" height="3" fill="#fff" opacity="0.15"/><rect x="27" y="51" width="3" height="3" fill="#000" opacity="0.020"/><rect x="30" y="51" width="3" height="3" fill="#000" opacity="0.022"/><rect x="36" y="51" width="3" height="3" fill="#fff" opacity="0.16"/><rect x="39" y="51" width="3" height="3" fill="#fff" opacity="0.23"/><rect x="48" y="51" width="3" height="3" fill="#000" opacity="0.026"/><rect x="60" y="51" width="3" height="3" fill="#fff" opacity="0.17"/><rect x="63" y="51" width="3" height="3" fill="#fff" opacity="0.19"/><rect x="66" y="51" width="3" height="3" fill="#000" opacity="0.026"/><rect x="69" y="51" width="3" height="3" fill="#fff" opacity="0.17"/><rect x="72" y="51" width="3" height="3" fill="#fff" opacity="0.07"/><rect x="75" y="51" width="3" height="3" fill="#fff" opacity="0.21"/><rect x="78" y="51" width="3" height="3" fill="#000" opacity="0.023"/><rect x="87" y="51" width="3" height="3" fill="#fff" opacity="0.18"/><rect x="96" y="51" width="3" height="3" fill="#000" opacity="0.022"/><rect x="102" y="51" width="3" height="3" fill="#fff" opacity="0.15"/><rect x="111" y="51" width="3" height="3" fill="#fff" opacity="0.18"/><rect x="114" y="51" width="3" height="3" fill="#fff" opacity="0.09"/><rect x="9" y="54" width="3" height="3" fill="#fff" opacity="0.16"/><rect x="15" y="54" width="3" height="3" fill="#fff" opacity="0.23"/><rect x="18" y="54" width="3" height="3" fill="#fff" opacity="0.11"/><rect x="21" y="54" width="3" height="3" fill="#fff" opacity="0.18"/><rect x="27" y="54" width="3" height="3" fill="#fff" opacity="0.23"/><rect x="33" y="54" width="3" height="3" fill="#fff" opacity="0.23"/><rect x="39" y="54" width="3" height="3" fill="#000" opacity="0.028"/><rect x="42" y="54" width="3" height="3" fill="#fff" opacity="0.12"/><rect x="51" y="54" width="3" height="3" fill="#000" opacity="0.021"/><rect x="54" y="54" width="3" height="3" fill="#fff" opacity="0.21"/><rect x="57" y="54" width="3" height="3" fill="#fff" opacity="0.21"/><rect x="60" y="54" width="3" height="3" fill="#000" opacity="0.023"/><rect x="66" y="54" width="3" height="3" fill="#fff" opacity="0.16"/><rect x="81" y="54" width="3" height="3" fill="#000" opacity="0.017"/><rect x="84" y="54" width="3" height="3" fill="#fff" opacity="0.17"/><rect x="93" y="54" width="3" height="3" fill="#fff" opacity="0.18"/><rect x="114" y="54" width="3" height="3" fill="#fff" opacity="0.22"/><rect x="0" y="57" width="3" height="3" fill="#fff" opacity="0.15"/><rect x="12" y="57" width="3" height="3" fill="#fff" opacity="0.23"/><rect x="15" y="57" width="3" height="3" fill="#000" opacity="0.015"/><rect x="18" y="57" width="3" height="3" fill="#fff" opacity="0.14"/><rect x="24" y="57" width="3" height="3" fill="#fff" opacity="0.12"/><rect x="30" y="57" width="3" height="3" fill="#000" opacity="0.018"/><rect x="66" y="57" width="3" height="3" fill="#000" opacity="0.016"/><rect x="93" y="57" width="3" height="3" fill="#fff" opacity="0.13"/><rect x="108" y="57" width="3" height="3" fill="#000" opacity="0.025"/><rect x="117" y="57" width="3" height="3" fill="#fff" opacity="0.18"/><rect x="0" y="60" width="3" height="3" fill="#fff" opacity="0.11"/><rect x="3" y="60" width="3" height="3" fill="#fff" opacity="0.20"/><rect x="6" y="60" width="3" height="3" fill="#fff" opacity="0.19"/><rect x="9" y="60" width="3" height="3" fill="#fff" opacity="0.10"/><rect x="18" y="60" width="3" height="3" fill="#fff" opacity="0.17"/><rect x="21" y="60" width="3" height="3" fill="#000" opacity="0.024"/><rect x="24" y="60" width="3" height="3" fill="#fff" opacity="0.06"/><rect x="27" y="60" width="3" height="3" fill="#fff" opacity="0.22"/><rect x="36" y="60" width="3" height="3" fill="#fff" opacity="0.18"/><rect x="42" y="60" width="3" height="3" fill="#fff" opacity="0.20"/><rect x="57" y="60" width="3" height="3" fill="#000" opacity="0.027"/><rect x="60" y="60" width="3" height="3" fill="#000" opacity="0.024"/><rect x="72" y="60" width="3" height="3" fill="#fff" opacity="0.09"/><rect x="75" y="60" width="3" height="3" fill="#000" opacity="0.021"/><rect x="81" y="60" width="3" height="3" fill="#fff" opacity="0.16"/><rect x="87" y="60" width="3" height="3" fill="#000" opacity="0.025"/><rect x="96" y="60" width="3" height="3" fill="#fff" opacity="0.22"/><rect x="105" y="60" width="3" height="3" fill="#fff" opacity="0.18"/><rect x="111" y="60" width="3" height="3" fill="#000" opacity="0.026"/><rect x="117" y="60" width="3" height="3" fill="#fff" opacity="0.21"/><rect x="0" y="63" width="3" height="3" fill="#000" opacity="0.022"/><rect x="12" y="63" width="3" height="3" fill="#000" opacity="0.028"/><rect x="15" y="63" width="3" height="3" fill="#fff" opacity="0.16"/><rect x="33" y="63" width="3" height="3" fill="#000" opacity="0.022"/><rect x="36" y="63" width="3" height="3" fill="#fff" opacity="0.12"/><rect x="39" y="63" width="3" height="3" fill="#fff" opacity="0.19"/><rect x="42" y="63" width="3" height="3" fill="#fff" opacity="0.22"/><rect x="51" y="63" width="3" height="3" fill="#fff" opacity="0.14"/><rect x="57" y="63" width="3" height="3" fill="#fff" opacity="0.24"/><rect x="60" y="63" width="3" height="3" fill="#000" opacity="0.022"/><rect x="63" y="63" width="3" height="3" fill="#000" opacity="0.021"/><rect x="66" y="63" width="3" height="3" fill="#fff" opacity="0.21"/><rect x="69" y="63" width="3" height="3" fill="#fff" opacity="0.13"/><rect x="78" y="63" width="3" height="3" fill="#000" opacity="0.022"/><rect x="81" y="63" width="3" height="3" fill="#fff" opacity="0.12"/><rect x="99" y="63" width="3" height="3" fill="#fff" opacity="0.16"/><rect x="102" y="63" width="3" height="3" fill="#fff" opacity="0.17"/><rect x="0" y="66" width="3" height="3" fill="#fff" opacity="0.23"/><rect x="6" y="66" width="3" height="3" fill="#000" opacity="0.022"/><rect x="18" y="66" width="3" height="3" fill="#000" opacity="0.017"/><rect x="21" y="66" width="3" height="3" fill="#fff" opacity="0.18"/><rect x="27" y="66" width="3" height="3" fill="#fff" opacity="0.06"/><rect x="33" y="66" width="3" height="3" fill="#000" opacity="0.016"/><rect x="39" y="66" width="3" height="3" fill="#fff" opacity="0.21"/><rect x="51" y="66" width="3" height="3" fill="#fff" opacity="0.10"/><rect x="63" y="66" width="3" height="3" fill="#000" opacity="0.024"/><rect x="78" y="66" width="3" height="3" fill="#fff" opacity="0.07"/><rect x="84" y="66" width="3" height="3" fill="#fff" opacity="0.15"/><rect x="96" y="66" width="3" height="3" fill="#fff" opacity="0.10"/><rect x="105" y="66" width="3" height="3" fill="#fff" opacity="0.23"/><rect x="108" y="66" width="3" height="3" fill="#000" opacity="0.026"/><rect x="0" y="69" width="3" height="3" fill="#fff" opacity="0.16"/><rect x="15" y="69" width="3" height="3" fill="#000" opacity="0.020"/><rect x="18" y="69" width="3" height="3" fill="#fff" opacity="0.15"/><rect x="30" y="69" width="3" height="3" fill="#fff" opacity="0.13"/><rect x="36" y="69" width="3" height="3" fill="#000" opacity="0.015"/><rect x="42" y="69" width="3" height="3" fill="#fff" opacity="0.18"/><rect x="48" y="69" width="3" height="3" fill="#000" opacity="0.019"/><rect x="51" y="69" width="3" height="3" fill="#000" opacity="0.023"/><rect x="57" y="69" width="3" height="3" fill="#fff" opacity="0.10"/><rect x="63" y="69" width="3" height="3" fill="#fff" opacity="0.18"/><rect x="69" y="69" width="3" height="3" fill="#fff" opacity="0.06"/><rect x="84" y="69" width="3" height="3" fill="#fff" opacity="0.15"/><rect x="87" y="69" width="3" height="3" fill="#fff" opacity="0.12"/><rect x="90" y="69" width="3" height="3" fill="#fff" opacity="0.15"/><rect x="96" y="69" width="3" height="3" fill="#000" opacity="0.018"/><rect x="99" y="69" width="3" height="3" fill="#fff" opacity="0.07"/><rect x="102" y="69" width="3" height="3" fill="#fff" opacity="0.24"/><rect x="105" y="69" width="3" height="3" fill="#fff" opacity="0.19"/><rect x="114" y="69" width="3" height="3" fill="#000" opacity="0.030"/><rect x="9" y="72" width="3" height="3" fill="#fff" opacity="0.22"/><rect x="24" y="72" width="3" height="3" fill="#fff" opacity="0.10"/><rect x="27" y="72" width="3" height="3" fill="#000" opacity="0.018"/><rect x="30" y="72" width="3" height="3" fill="#fff" opacity="0.19"/><rect x="39" y="72" width="3" height="3" fill="#000" opacity="0.029"/><rect x="42" y="72" width="3" height="3" fill="#fff" opacity="0.15"/><rect x="51" y="72" width="3" height="3" fill="#fff" opacity="0.16"/><rect x="60" y="72" width="3" height="3" fill="#fff" opacity="0.16"/><rect x="66" y="72" width="3" height="3" fill="#fff" opacity="0.23"/><rect x="75" y="72" width="3" height="3" fill="#fff" opacity="0.15"/><rect x="81" y="72" width="3" height="3" fill="#fff" opacity="0.20"/><rect x="87" y="72" width="3" height="3" fill="#fff" opacity="0.17"/><rect x="90" y="72" width="3" height="3" fill="#fff" opacity="0.08"/><rect x="96" y="72" width="3" height="3" fill="#000" opacity="0.025"/><rect x="102" y="72" width="3" height="3" fill="#fff" opacity="0.23"/><rect x="105" y="72" width="3" height="3" fill="#fff" opacity="0.20"/><rect x="108" y="72" width="3" height="3" fill="#000" opacity="0.028"/><rect x="117" y="72" width="3" height="3" fill="#fff" opacity="0.21"/><rect x="18" y="75" width="3" height="3" fill="#000" opacity="0.024"/><rect x="21" y="75" width="3" height="3" fill="#000" opacity="0.027"/><rect x="36" y="75" width="3" height="3" fill="#fff" opacity="0.12"/><rect x="39" y="75" width="3" height="3" fill="#fff" opacity="0.12"/><rect x="42" y="75" width="3" height="3" fill="#fff" opacity="0.11"/><rect x="48" y="75" width="3" height="3" fill="#fff" opacity="0.23"/><rect x="57" y="75" width="3" height="3" fill="#fff" opacity="0.11"/><rect x="69" y="75" width="3" height="3" fill="#fff" opacity="0.08"/><rect x="75" y="75" width="3" height="3" fill="#fff" opacity="0.22"/><rect x="78" y="75" width="3" height="3" fill="#fff" opacity="0.24"/><rect x="102" y="75" width="3" height="3" fill="#fff" opacity="0.11"/><rect x="114" y="75" width="3" height="3" fill="#000" opacity="0.020"/><rect x="117" y="75" width="3" height="3" fill="#fff" opacity="0.21"/><rect x="0" y="78" width="3" height="3" fill="#fff" opacity="0.09"/><rect x="3" y="78" width="3" height="3" fill="#fff" opacity="0.14"/><rect x="9" y="78" width="3" height="3" fill="#fff" opacity="0.11"/><rect x="12" y="78" width="3" height="3" fill="#fff" opacity="0.19"/><rect x="15" y="78" width="3" height="3" fill="#000" opacity="0.018"/><rect x="24" y="78" width="3" height="3" fill="#fff" opacity="0.07"/><rect x="33" y="78" width="3" height="3" fill="#fff" opacity="0.08"/><rect x="45" y="78" width="3" height="3" fill="#fff" opacity="0.16"/><rect x="48" y="78" width="3" height="3" fill="#fff" opacity="0.07"/><rect x="51" y="78" width="3" height="3" fill="#fff" opacity="0.23"/><rect x="54" y="78" width="3" height="3" fill="#fff" opacity="0.15"/><rect x="60" y="78" width="3" height="3" fill="#fff" opacity="0.13"/><rect x="69" y="78" width="3" height="3" fill="#fff" opacity="0.16"/><rect x="81" y="78" width="3" height="3" fill="#fff" opacity="0.07"/><rect x="87" y="78" width="3" height="3" fill="#fff" opacity="0.23"/><rect x="90" y="78" width="3" height="3" fill="#000" opacity="0.023"/><rect x="102" y="78" width="3" height="3" fill="#fff" opacity="0.14"/><rect x="111" y="78" width="3" height="3" fill="#fff" opacity="0.21"/><rect x="114" y="78" width="3" height="3" fill="#000" opacity="0.029"/><rect x="117" y="78" width="3" height="3" fill="#000" opacity="0.027"/><rect x="0" y="81" width="3" height="3" fill="#fff" opacity="0.18"/><rect x="21" y="81" width="3" height="3" fill="#fff" opacity="0.08"/><rect x="27" y="81" width="3" height="3" fill="#fff" opacity="0.07"/><rect x="36" y="81" width="3" height="3" fill="#fff" opacity="0.21"/><rect x="45" y="81" width="3" height="3" fill="#fff" opacity="0.08"/><rect x="54" y="81" width="3" height="3" fill="#fff" opacity="0.09"/><rect x="60" y="81" width="3" height="3" fill="#fff" opacity="0.08"/><rect x="63" y="81" width="3" height="3" fill="#fff" opacity="0.16"/><rect x="66" y="81" width="3" height="3" fill="#000" opacity="0.028"/><rect x="69" y="81" width="3" height="3" fill="#fff" opacity="0.22"/><rect x="75" y="81" width="3" height="3" fill="#000" opacity="0.024"/><rect x="81" y="81" width="3" height="3" fill="#fff" opacity="0.23"/><rect x="93" y="81" width="3" height="3" fill="#fff" opacity="0.11"/><rect x="96" y="81" width="3" height="3" fill="#fff" opacity="0.19"/><rect x="99" y="81" width="3" height="3" fill="#fff" opacity="0.19"/><rect x="108" y="81" width="3" height="3" fill="#fff" opacity="0.13"/><rect x="117" y="81" width="3" height="3" fill="#fff" opacity="0.18"/><rect x="6" y="84" width="3" height="3" fill="#000" opacity="0.017"/><rect x="15" y="84" width="3" height="3" fill="#000" opacity="0.029"/><rect x="18" y="84" width="3" height="3" fill="#000" opacity="0.022"/><rect x="36" y="84" width="3" height="3" fill="#fff" opacity="0.16"/><rect x="42" y="84" width="3" height="3" fill="#fff" opacity="0.12"/><rect x="45" y="84" width="3" height="3" fill="#fff" opacity="0.14"/><rect x="60" y="84" width="3" height="3" fill="#fff" opacity="0.14"/><rect x="66" y="84" width="3" height="3" fill="#fff" opacity="0.16"/><rect x="72" y="84" width="3" height="3" fill="#fff" opacity="0.10"/><rect x="78" y="84" width="3" height="3" fill="#fff" opacity="0.17"/><rect x="84" y="84" width="3" height="3" fill="#000" opacity="0.028"/><rect x="87" y="84" width="3" height="3" fill="#000" opacity="0.028"/><rect x="96" y="84" width="3" height="3" fill="#fff" opacity="0.12"/><rect x="102" y="84" width="3" height="3" fill="#fff" opacity="0.17"/><rect x="105" y="84" width="3" height="3" fill="#fff" opacity="0.19"/><rect x="117" y="84" width="3" height="3" fill="#fff" opacity="0.20"/><rect x="9" y="87" width="3" height="3" fill="#000" opacity="0.022"/><rect x="27" y="87" width="3" height="3" fill="#fff" opacity="0.21"/><rect x="33" y="87" width="3" height="3" fill="#fff" opacity="0.14"/><rect x="42" y="87" width="3" height="3" fill="#fff" opacity="0.22"/><rect x="48" y="87" width="3" height="3" fill="#fff" opacity="0.18"/><rect x="63" y="87" width="3" height="3" fill="#fff" opacity="0.18"/><rect x="84" y="87" width="3" height="3" fill="#fff" opacity="0.09"/><rect x="87" y="87" width="3" height="3" fill="#fff" opacity="0.23"/><rect x="105" y="87" width="3" height="3" fill="#fff" opacity="0.09"/><rect x="111" y="87" width="3" height="3" fill="#fff" opacity="0.12"/><rect x="117" y="87" width="3" height="3" fill="#fff" opacity="0.09"/><rect x="0" y="90" width="3" height="3" fill="#fff" opacity="0.14"/><rect x="24" y="90" width="3" height="3" fill="#fff" opacity="0.09"/><rect x="27" y="90" width="3" height="3" fill="#fff" opacity="0.12"/><rect x="36" y="90" width="3" height="3" fill="#000" opacity="0.018"/><rect x="48" y="90" width="3" height="3" fill="#fff" opacity="0.19"/><rect x="69" y="90" width="3" height="3" fill="#fff" opacity="0.21"/><rect x="75" y="90" width="3" height="3" fill="#fff" opacity="0.17"/><rect x="84" y="90" width="3" height="3" fill="#000" opacity="0.026"/><rect x="93" y="90" width="3" height="3" fill="#000" opacity="0.022"/><rect x="96" y="90" width="3" height="3" fill="#000" opacity="0.017"/><rect x="102" y="90" width="3" height="3" fill="#000" opacity="0.022"/><rect x="114" y="90" width="3" height="3" fill="#fff" opacity="0.09"/><rect x="117" y="90" width="3" height="3" fill="#fff" opacity="0.19"/><rect x="0" y="93" width="3" height="3" fill="#000" opacity="0.018"/><rect x="21" y="93" width="3" height="3" fill="#fff" opacity="0.20"/><rect x="24" y="93" width="3" height="3" fill="#fff" opacity="0.07"/><rect x="27" y="93" width="3" height="3" fill="#000" opacity="0.026"/><rect x="36" y="93" width="3" height="3" fill="#fff" opacity="0.09"/><rect x="63" y="93" width="3" height="3" fill="#000" opacity="0.023"/><rect x="66" y="93" width="3" height="3" fill="#fff" opacity="0.09"/><rect x="75" y="93" width="3" height="3" fill="#fff" opacity="0.13"/><rect x="78" y="93" width="3" height="3" fill="#000" opacity="0.016"/><rect x="81" y="93" width="3" height="3" fill="#fff" opacity="0.17"/><rect x="93" y="93" width="3" height="3" fill="#fff" opacity="0.17"/><rect x="96" y="93" width="3" height="3" fill="#fff" opacity="0.10"/><rect x="99" y="93" width="3" height="3" fill="#000" opacity="0.017"/><rect x="102" y="93" width="3" height="3" fill="#fff" opacity="0.24"/><rect x="105" y="93" width="3" height="3" fill="#fff" opacity="0.23"/><rect x="114" y="93" width="3" height="3" fill="#fff" opacity="0.18"/><rect x="117" y="93" width="3" height="3" fill="#fff" opacity="0.15"/><rect x="6" y="96" width="3" height="3" fill="#fff" opacity="0.06"/><rect x="18" y="96" width="3" height="3" fill="#fff" opacity="0.13"/><rect x="27" y="96" width="3" height="3" fill="#000" opacity="0.015"/><rect x="30" y="96" width="3" height="3" fill="#fff" opacity="0.22"/><rect x="33" y="96" width="3" height="3" fill="#fff" opacity="0.07"/><rect x="36" y="96" width="3" height="3" fill="#000" opacity="0.018"/><rect x="42" y="96" width="3" height="3" fill="#fff" opacity="0.16"/><rect x="54" y="96" width="3" height="3" fill="#fff" opacity="0.13"/><rect x="60" y="96" width="3" height="3" fill="#000" opacity="0.027"/><rect x="63" y="96" width="3" height="3" fill="#fff" opacity="0.15"/><rect x="72" y="96" width="3" height="3" fill="#fff" opacity="0.13"/><rect x="75" y="96" width="3" height="3" fill="#000" opacity="0.026"/><rect x="78" y="96" width="3" height="3" fill="#000" opacity="0.028"/><rect x="90" y="96" width="3" height="3" fill="#000" opacity="0.025"/><rect x="96" y="96" width="3" height="3" fill="#fff" opacity="0.14"/><rect x="99" y="96" width="3" height="3" fill="#fff" opacity="0.07"/><rect x="102" y="96" width="3" height="3" fill="#fff" opacity="0.23"/><rect x="114" y="96" width="3" height="3" fill="#000" opacity="0.023"/><rect x="117" y="96" width="3" height="3" fill="#fff" opacity="0.21"/><rect x="9" y="99" width="3" height="3" fill="#000" opacity="0.027"/><rect x="18" y="99" width="3" height="3" fill="#fff" opacity="0.22"/><rect x="21" y="99" width="3" height="3" fill="#fff" opacity="0.08"/><rect x="30" y="99" width="3" height="3" fill="#fff" opacity="0.18"/><rect x="42" y="99" width="3" height="3" fill="#fff" opacity="0.12"/><rect x="45" y="99" width="3" height="3" fill="#fff" opacity="0.13"/><rect x="54" y="99" width="3" height="3" fill="#fff" opacity="0.16"/><rect x="66" y="99" width="3" height="3" fill="#fff" opacity="0.08"/><rect x="69" y="99" width="3" height="3" fill="#fff" opacity="0.15"/><rect x="72" y="99" width="3" height="3" fill="#fff" opacity="0.18"/><rect x="75" y="99" width="3" height="3" fill="#fff" opacity="0.07"/><rect x="90" y="99" width="3" height="3" fill="#000" opacity="0.016"/><rect x="99" y="99" width="3" height="3" fill="#fff" opacity="0.07"/><rect x="117" y="99" width="3" height="3" fill="#fff" opacity="0.09"/><rect x="3" y="102" width="3" height="3" fill="#fff" opacity="0.15"/><rect x="9" y="102" width="3" height="3" fill="#fff" opacity="0.21"/><rect x="12" y="102" width="3" height="3" fill="#fff" opacity="0.21"/><rect x="15" y="102" width="3" height="3" fill="#fff" opacity="0.08"/><rect x="18" y="102" width="3" height="3" fill="#fff" opacity="0.16"/><rect x="21" y="102" width="3" height="3" fill="#fff" opacity="0.18"/><rect x="30" y="102" width="3" height="3" fill="#000" opacity="0.028"/><rect x="36" y="102" width="3" height="3" fill="#000" opacity="0.027"/><rect x="48" y="102" width="3" height="3" fill="#fff" opacity="0.15"/><rect x="60" y="102" width="3" height="3" fill="#fff" opacity="0.22"/><rect x="66" y="102" width="3" height="3" fill="#fff" opacity="0.16"/><rect x="69" y="102" width="3" height="3" fill="#fff" opacity="0.15"/><rect x="81" y="102" width="3" height="3" fill="#fff" opacity="0.22"/><rect x="87" y="102" width="3" height="3" fill="#fff" opacity="0.07"/><rect x="93" y="102" width="3" height="3" fill="#fff" opacity="0.08"/><rect x="99" y="102" width="3" height="3" fill="#fff" opacity="0.17"/><rect x="102" y="102" width="3" height="3" fill="#fff" opacity="0.18"/><rect x="108" y="102" width="3" height="3" fill="#fff" opacity="0.18"/><rect x="117" y="102" width="3" height="3" fill="#fff" opacity="0.18"/><rect x="0" y="105" width="3" height="3" fill="#000" opacity="0.021"/><rect x="6" y="105" width="3" height="3" fill="#fff" opacity="0.17"/><rect x="9" y="105" width="3" height="3" fill="#fff" opacity="0.21"/><rect x="12" y="105" width="3" height="3" fill="#fff" opacity="0.17"/><rect x="18" y="105" width="3" height="3" fill="#fff" opacity="0.08"/><rect x="24" y="105" width="3" height="3" fill="#000" opacity="0.017"/><rect x="27" y="105" width="3" height="3" fill="#fff" opacity="0.10"/><rect x="33" y="105" width="3" height="3" fill="#fff" opacity="0.20"/><rect x="36" y="105" width="3" height="3" fill="#fff" opacity="0.21"/><rect x="45" y="105" width="3" height="3" fill="#000" opacity="0.030"/><rect x="57" y="105" width="3" height="3" fill="#fff" opacity="0.07"/><rect x="63" y="105" width="3" height="3" fill="#fff" opacity="0.10"/><rect x="69" y="105" width="3" height="3" fill="#fff" opacity="0.11"/><rect x="72" y="105" width="3" height="3" fill="#fff" opacity="0.08"/><rect x="96" y="105" width="3" height="3" fill="#fff" opacity="0.12"/><rect x="99" y="105" width="3" height="3" fill="#fff" opacity="0.18"/><rect x="108" y="105" width="3" height="3" fill="#000" opacity="0.027"/><rect x="111" y="105" width="3" height="3" fill="#fff" opacity="0.20"/><rect x="114" y="105" width="3" height="3" fill="#fff" opacity="0.23"/><rect x="9" y="108" width="3" height="3" fill="#000" opacity="0.026"/><rect x="24" y="108" width="3" height="3" fill="#fff" opacity="0.11"/><rect x="30" y="108" width="3" height="3" fill="#000" opacity="0.021"/><rect x="36" y="108" width="3" height="3" fill="#000" opacity="0.022"/><rect x="39" y="108" width="3" height="3" fill="#fff" opacity="0.14"/><rect x="54" y="108" width="3" height="3" fill="#fff" opacity="0.20"/><rect x="75" y="108" width="3" height="3" fill="#fff" opacity="0.12"/><rect x="78" y="108" width="3" height="3" fill="#fff" opacity="0.19"/><rect x="84" y="108" width="3" height="3" fill="#000" opacity="0.020"/><rect x="90" y="108" width="3" height="3" fill="#000" opacity="0.022"/><rect x="96" y="108" width="3" height="3" fill="#fff" opacity="0.10"/><rect x="9" y="111" width="3" height="3" fill="#000" opacity="0.019"/><rect x="18" y="111" width="3" height="3" fill="#fff" opacity="0.15"/><rect x="33" y="111" width="3" height="3" fill="#000" opacity="0.016"/><rect x="51" y="111" width="3" height="3" fill="#000" opacity="0.024"/><rect x="63" y="111" width="3" height="3" fill="#fff" opacity="0.20"/><rect x="66" y="111" width="3" height="3" fill="#fff" opacity="0.12"/><rect x="69" y="111" width="3" height="3" fill="#000" opacity="0.027"/><rect x="84" y="111" width="3" height="3" fill="#fff" opacity="0.13"/><rect x="90" y="111" width="3" height="3" fill="#fff" opacity="0.12"/><rect x="93" y="111" width="3" height="3" fill="#fff" opacity="0.08"/><rect x="96" y="111" width="3" height="3" fill="#fff" opacity="0.13"/><rect x="105" y="111" width="3" height="3" fill="#000" opacity="0.027"/><rect x="111" y="111" width="3" height="3" fill="#fff" opacity="0.10"/><rect x="117" y="111" width="3" height="3" fill="#fff" opacity="0.17"/><rect x="12" y="114" width="3" height="3" fill="#fff" opacity="0.19"/><rect x="24" y="114" width="3" height="3" fill="#fff" opacity="0.14"/><rect x="30" y="114" width="3" height="3" fill="#000" opacity="0.020"/><rect x="33" y="114" width="3" height="3" fill="#000" opacity="0.021"/><rect x="42" y="114" width="3" height="3" fill="#fff" opacity="0.15"/><rect x="48" y="114" width="3" height="3" fill="#000" opacity="0.019"/><rect x="66" y="114" width="3" height="3" fill="#000" opacity="0.015"/><rect x="75" y="114" width="3" height="3" fill="#000" opacity="0.029"/><rect x="90" y="114" width="3" height="3" fill="#fff" opacity="0.11"/><rect x="108" y="114" width="3" height="3" fill="#fff" opacity="0.08"/><rect x="114" y="114" width="3" height="3" fill="#fff" opacity="0.16"/><rect x="6" y="117" width="3" height="3" fill="#000" opacity="0.024"/><rect x="21" y="117" width="3" height="3" fill="#000" opacity="0.029"/><rect x="24" y="117" width="3" height="3" fill="#fff" opacity="0.16"/><rect x="45" y="117" width="3" height="3" fill="#000" opacity="0.025"/><rect x="48" y="117" width="3" height="3" fill="#fff" opacity="0.07"/><rect x="51" y="117" width="3" height="3" fill="#fff" opacity="0.09"/><rect x="57" y="117" width="3" height="3" fill="#fff" opacity="0.20"/><rect x="63" y="117" width="3" height="3" fill="#000" opacity="0.018"/><rect x="78" y="117" width="3" height="3" fill="#000" opacity="0.028"/><rect x="84" y="117" width="3" height="3" fill="#000" opacity="0.029"/><rect x="90" y="117" width="3" height="3" fill="#fff" opacity="0.07"/><rect x="105" y="117" width="3" height="3" fill="#fff" opacity="0.17"/><rect x="111" y="117" width="3" height="3" fill="#000" opacity="0.018"/></pattern>
<clipPath id="cc"><circle cx="189.5" cy="171" r="169.5"/></clipPath>
</defs>
<rect width="379" height="343" fill="#0b095e"/>
<rect x="19" y="1" width="341" height="341" fill="#000"/>
<rect x="19.5" y="1.5" width="340" height="340" fill="none" stroke="#00ff00" stroke-width="1" shape-rendering="crispEdges"/>
<circle cx="189.5" cy="171" r="170.6" fill="#00ff00" shape-rendering="crispEdges"/>
<circle cx="189.5" cy="171" r="169.3" fill="#dbdbdb" shape-rendering="crispEdges"/>
<g clip-path="url(#cc)"><rect width="379" height="343" fill="url(#pt)" filter="url(#bl2)"/><g filter="url(#bl)"><rect x="302" y="167" width="3" height="3" fill="rgb(167,167,167)"/><rect x="311" y="167" width="3" height="3" fill="rgb(163,163,163)"/><rect x="314" y="167" width="3" height="3" fill="rgb(140,140,140)"/><rect x="305" y="170" width="3" height="3" fill="rgb(163,163,163)"/><rect x="314" y="170" width="3" height="3" fill="rgb(135,135,135)"/><rect x="290" y="173" width="3" height="3" fill="rgb(87,87,87)"/><rect x="293" y="173" width="3" height="3" fill="rgb(150,150,150)"/><rect x="302" y="173" width="3" height="3" fill="rgb(172,172,172)"/><rect x="308" y="173" width="3" height="3" fill="rgb(175,175,175)"/><rect x="311" y="173" width="3" height="3" fill="rgb(135,135,135)"/><rect x="287" y="176" width="3" height="3" fill="rgb(170,170,170)"/><rect x="299" y="176" width="3" height="3" fill="rgb(149,149,149)"/><rect x="302" y="176" width="3" height="3" fill="rgb(136,136,136)"/><rect x="305" y="176" width="3" height="3" fill="rgb(91,91,91)"/><rect x="308" y="176" width="3" height="3" fill="rgb(153,153,153)"/><rect x="311" y="176" width="3" height="3" fill="rgb(136,136,136)"/><rect x="317" y="176" width="3" height="3" fill="rgb(98,98,98)"/><rect x="287" y="179" width="3" height="3" fill="rgb(109,109,109)"/><rect x="293" y="179" width="3" height="3" fill="rgb(139,139,139)"/><rect x="296" y="179" width="3" height="3" fill="rgb(147,147,147)"/><rect x="302" y="179" width="3" height="3" fill="rgb(140,140,140)"/><rect x="305" y="179" width="3" height="3" fill="rgb(135,135,135)"/><rect x="314" y="179" width="3" height="3" fill="rgb(100,100,100)"/><rect x="284" y="182" width="3" height="3" fill="rgb(114,114,114)"/><rect x="290" y="182" width="3" height="3" fill="rgb(170,170,170)"/><rect x="293" y="182" width="3" height="3" fill="rgb(167,167,167)"/><rect x="296" y="182" width="3" height="3" fill="rgb(181,181,181)"/><rect x="302" y="182" width="3" height="3" fill="rgb(159,159,159)"/><rect x="305" y="182" width="3" height="3" fill="rgb(111,111,111)"/><rect x="311" y="182" width="3" height="3" fill="rgb(104,104,104)"/><rect x="317" y="182" width="3" height="3" fill="rgb(96,96,96)"/><rect x="293" y="185" width="3" height="3" fill="rgb(94,94,94)"/><rect x="296" y="185" width="3" height="3" fill="rgb(151,151,151)"/><rect x="299" y="185" width="3" height="3" fill="rgb(106,106,106)"/><rect x="305" y="185" width="3" height="3" fill="rgb(139,139,139)"/><rect x="308" y="185" width="3" height="3" fill="rgb(100,100,100)"/><rect x="311" y="185" width="3" height="3" fill="rgb(108,108,108)"/><rect x="314" y="185" width="3" height="3" fill="rgb(164,164,164)"/><rect x="317" y="185" width="3" height="3" fill="rgb(172,172,172)"/><rect x="293" y="188" width="3" height="3" fill="rgb(144,144,144)"/><rect x="296" y="188" width="3" height="3" fill="rgb(149,149,149)"/><rect x="302" y="188" width="3" height="3" fill="rgb(147,147,147)"/><rect x="305" y="188" width="3" height="3" fill="rgb(175,175,175)"/><rect x="311" y="188" width="3" height="3" fill="rgb(159,159,159)"/><rect x="287" y="191" width="3" height="3" fill="rgb(141,141,141)"/><rect x="290" y="191" width="3" height="3" fill="rgb(117,117,117)"/><rect x="296" y="191" width="3" height="3" fill="rgb(180,180,180)"/><rect x="299" y="191" width="3" height="3" fill="rgb(161,161,161)"/><rect x="308" y="191" width="3" height="3" fill="rgb(146,146,146)"/><rect x="284" y="194" width="3" height="3" fill="rgb(165,165,165)"/><rect x="296" y="194" width="3" height="3" fill="rgb(148,148,148)"/><rect x="302" y="194" width="3" height="3" fill="rgb(111,111,111)"/><rect x="305" y="194" width="3" height="3" fill="rgb(138,138,138)"/><rect x="308" y="194" width="3" height="3" fill="rgb(103,103,103)"/><rect x="290" y="197" width="3" height="3" fill="rgb(158,158,158)"/><rect x="293" y="197" width="3" height="3" fill="rgb(163,163,163)"/><rect x="308" y="197" width="3" height="3" fill="rgb(137,137,137)"/><rect x="296" y="200" width="3" height="3" fill="rgb(154,154,154)"/><rect x="302" y="200" width="3" height="3" fill="rgb(89,89,89)"/></g></g>
</svg>
<div class="a" style="left:800px;top:111px;width:17px;height:343px;background:linear-gradient(90deg,#e3e3e3 0,#f0f0f0 30%,#f0f0f0 70%,#e8e8e8 100%)"></div>
<svg class="a" style="left:805px;top:117px" width="9" height="6"><path d="M0 5h8l-4-4.5z" fill="#3a3a3a"/></svg>
<svg class="a" style="left:805px;top:443px" width="9" height="6"><path d="M0 0h8l-4 4.5z" fill="#3a3a3a"/></svg>
<div class="a" style="left:802px;top:232px;width:14px;height:100px;border:1px solid #999;border-radius:2px;background:linear-gradient(90deg,#f6f6f6 0,#ececec 45%,#dcdcdc 55%,#d4d4d4 100%)"></div>
<div class="a" style="left:806px;top:279px;width:6px;height:1px;background:#555"></div><div class="a" style="left:806px;top:281px;width:6px;height:1px;background:#555"></div><div class="a" style="left:806px;top:283px;width:6px;height:1px;background:#555"></div>
<div class="a" style="left:421px;top:454px;width:379px;height:16px;background:linear-gradient(180deg,#e3e3e3 0,#f0f0f0 30%,#f0f0f0 70%,#e8e8e8 100%)"></div>
<div class="a" style="left:800px;top:454px;width:17px;height:16px;background:#f0f0f0"></div>
<svg class="a" style="left:426px;top:459px" width="6" height="9"><path d="M5 0v8l-4.5-4z" fill="#3a3a3a"/></svg>
<svg class="a" style="left:789px;top:459px" width="6" height="9"><path d="M0 0v8l4.5-4z" fill="#3a3a3a"/></svg>
<div class="a" style="left:553px;top:455px;width:115px;height:15px;border:1px solid #999;border-radius:2px;background:linear-gradient(180deg,#f6f6f6 0,#ececec 45%,#dcdcdc 55%,#d4d4d4 100%)"></div>
<div class="a" style="left:607px;top:459px;width:1px;height:6px;background:#555"></div><div class="a" style="left:609px;top:459px;width:1px;height:6px;background:#555"></div><div class="a" style="left:611px;top:459px;width:1px;height:6px;background:#555"></div>
<div class="a" style="left:8px;top:474px;width:812px;height:1px;background:#a0a0a0"></div>
<div class="a" style="left:8px;top:475px;width:812px;height:21px;background:#f0eded;border-top:1px solid #fff;border-bottom:2px solid #fff"></div>
<div class="t" style="left:12px;top:480px">C:\Program Files\Cognex\VisionPro\Images\noisydiscs5.bmp</div>
<div class="t" style="left:388px;top:480px">Idle</div>
<div class="a" style="left:815px;top:483px;width:2px;height:2px;background:#a0a0a0"></div>
<div class="a" style="left:811px;top:487px;width:2px;height:2px;background:#a0a0a0"></div>
<div class="a" style="left:815px;top:487px;width:2px;height:2px;background:#a0a0a0"></div>
<div class="a" style="left:807px;top:491px;width:2px;height:2px;background:#a0a0a0"></div>
<div class="a" style="left:811px;top:491px;width:2px;height:2px;background:#a0a0a0"></div>
<div class="a" style="left:815px;top:491px;width:2px;height:2px;background:#a0a0a0"></div>
<svg class="a" style="left:0;top:0" width="828" height="504">
<defs><filter id="sh" x="-20%" y="-20%" width="140%" height="140%"><feGaussianBlur stdDeviation="1.6"/></filter></defs>
<g transform="translate(2.5,3)" filter="url(#sh)" opacity="0.55">
<path d="M77 458 L112 435" stroke="#000" stroke-width="3"/>
<path d="M133 421 L108 430 L115 440z" fill="#000"/>
<path d="M329 448 L277 430" stroke="#000" stroke-width="3"/>
<path d="M253 422 L280 425 L276 436z" fill="#000"/>
</g>
<path d="M77 458 L112 435" stroke="#f00" stroke-width="3"/>
<path d="M133 421 L108 430 L115 440z" fill="#f00"/>
<path d="M329 448 L277 430" stroke="#f00" stroke-width="3"/>
<path d="M253 422 L280 425 L276 436z" fill="#f00"/>
</svg>
<div class="a" style="left:11px;top:457px;width:125px;height:35px;border:2px solid #f00;background:#ffff88;box-shadow:3px 3px 4px rgba(0,0,0,.5)"></div>
<div class="t" style="left:24px;top:466px;font-weight:bold;font-size:13px;line-height:13px;letter-spacing:0.1px">Assigned grade</div>
<div class="a" style="left:241px;top:450px;width:149px;height:50px;border:2px solid #f00;background:#ffff88;box-shadow:3px 3px 4px rgba(0,0,0,.5)"></div>
<div class="t" style="left:254px;top:458px;font-weight:bold;font-size:13px;line-height:16.5px;letter-spacing:0.05px">RunStatus.Result of<br>CogToolGroup</div>
</body></html>
